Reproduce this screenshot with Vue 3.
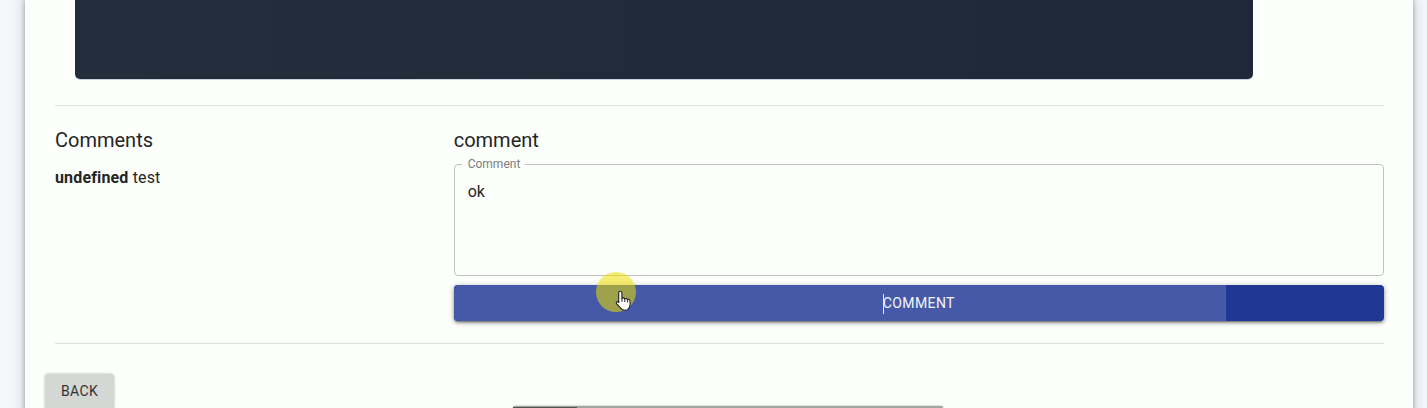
<script setup>
import { ref } from 'vue'

const draft = ref('ok')
const comments = [{ author: 'undefined', text: 'test' }]
</script>

<template>
  <div class="page">
    <main class="paper">
      <div class="media"></div>
      <hr class="divider" />
      <section class="discussion">
        <div class="list">
          <h2>Comments</h2>
          <p v-for="item in comments" :key="item.text"><strong>{{ item.author }}</strong> {{ item.text }}</p>
        </div>
        <form class="editor" @submit.prevent>
          <h2>comment</h2>
          <div class="field">
            <label for="draft">Comment</label>
            <textarea id="draft" v-model="draft"></textarea>
          </div>
          <button type="submit" class="send">
            <span class="ripple"></span>
            <span class="send-text">COMMENT</span>
          </button>
        </form>
      </section>
      <hr class="divider" />
      <button type="button" class="back">BACK</button>
    </main>

    <div class="dock"><span class="dock-tab"></span></div>

    <div class="pointer">
      <svg width="18" height="22" viewBox="0 0 16 20">
        <path
          d="M4.6 1.2c.9 0 1.5.6 1.5 1.5v5c.4-.8 2.3-.7 2.6.4.7-.7 2.2-.4 2.4.7.9-.6 2.4 0 2.4 1.4v3.3c0 1.6-.6 2.5-1.3 3.3-.8 1.1-1.9 1.6-3.3 1.6-1.700 0-2.900-.5-3.700-1.700L1.200 12.400c-.7-1 .4-2.300 1.500-1.600l.5.600V2.700c0-.9.6-1.500 1.400-1.500z"
          fill="#fff" stroke="#222" stroke-width="1" stroke-linejoin="round"
        />
        <path d="M6.1 7.500v3.200M8.700 8.200v2.800M11.100 8.900v2.400" fill="none" stroke="#222" stroke-width="0.9" />
      </svg>
    </div>
  </div>
</template>

<style>
body {
  margin: 0;
}
</style>

<style scoped>
.page {
  position: relative;
  box-sizing: border-box;
  height: 100vh;
  overflow: hidden;
  padding: 0 14px 0 25px;
  background: #f5f6f9;
  color: #252525;
  font-family: Roboto, "Liberation Sans", sans-serif;
}

.paper {
  box-sizing: border-box;
  min-height: 100vh;
  padding: 0 29px 40px 30px;
  background: #fdfffc;
  box-shadow: 0 0 5px rgba(0, 0, 0, 0.34), 0 0 12px 4px rgba(0, 0, 0, 0.09);
}

.media {
  height: 79px;
  margin: 0 131px 0 20px;
  border-radius: 0 0 5px 5px;
  background: linear-gradient(90deg, #232d3c, #1f2838);
  box-shadow: 0 1px 0 #c9d2da;
}

.divider {
  height: 1px;
  margin: 26px 0 22px;
  border: 0;
  background: #dfe1df;
}

.discussion {
  display: grid;
  grid-template-columns: 3fr 7fr;
}

h2 {
  margin: 0;
  font-size: 20px;
  line-height: 24px;
  font-weight: 400;
}

p {
  margin: 14px 0 0;
  font-size: 16px;
  line-height: 24px;
  letter-spacing: 0.00938em;
}

.editor {
  display: flex;
  flex-direction: column;
}

.field {
  position: relative;
  margin-top: 12px;
}

.field label {
  position: absolute;
  top: -8px;
  left: 8px;
  padding: 0 5px 0 6px;
  background: #fdfffc;
  color: #7c7c7c;
  font-size: 12px;
  line-height: 16px;
}

.field textarea {
  display: block;
  box-sizing: border-box;
  width: 100%;
  height: 112px;
  padding: 17px 13px;
  border: 1px solid #c1c3c1;
  border-radius: 4px;
  outline: 0;
  resize: none;
  background: transparent;
  color: inherit;
  font: 16px/19px Roboto, "Liberation Sans", sans-serif;
}

.send {
  position: relative;
  overflow: hidden;
  height: 36px;
  margin-top: 9px;
  padding: 0 0 1px;
  border: 0;
  border-radius: 4px;
  background: #213796;
  box-shadow: 0 3px 1px -2px rgba(0, 0, 0, 0.2), 0 2px 3px rgba(0, 0, 0, 0.3), 0 1px 6px rgba(0, 0, 0, 0.26);
  color: #f4f6fb;
  font: 14px/18px Roboto, "Liberation Sans", sans-serif;
  letter-spacing: 0.02857em;
}

.ripple {
  position: absolute;
  inset: 0 17% 0 0;
  background: #4559a8;
}

.send-text {
  position: relative;
  display: inline-block;
}

.send-text::before {
  content: "";
  position: absolute;
  top: 0;
  left: 0;
  width: 1px;
  height: 20px;
  background: #e8ebf5;
}

.discussion + .divider {
  margin: 22px 0 30px;
}

.back {
  display: block;
  height: 36px;
  margin-left: -10px;
  padding: 0 16px 2px;
  border: 0;
  border-radius: 4px;
  background: #d5d7d4;
  box-shadow: 0 0 3px rgba(0, 0, 0, 0.3);
  color: #333;
  font: 14px/32px Roboto, "Liberation Sans", sans-serif;
  letter-spacing: 0.02857em;
}

.dock {
  position: absolute;
  bottom: 0;
  left: 513px;
  width: 430px;
  height: 2px;
  border-radius: 3px 3px 0 0;
  background: #a3a5a3;
  box-shadow: 0 0 2px rgba(0, 0, 0, 0.4);
}

.dock-tab {
  position: absolute;
  bottom: 0;
  left: 0;
  width: 64px;
  height: 1px;
  background: #505250;
}

.pointer {
  position: absolute;
  top: 272px;
  left: 596px;
  width: 40px;
  height: 40px;
  border-radius: 50%;
  background: rgba(238, 222, 0, 0.54);
}

.pointer svg {
  position: absolute;
  top: 18px;
  left: 19px;
}
</style>
